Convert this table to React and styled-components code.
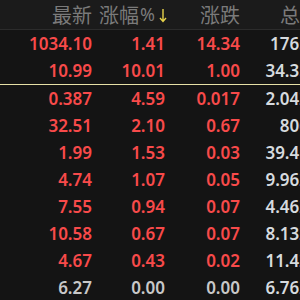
import React from "react";
import styled, { createGlobalStyle } from "styled-components";

const Global = createGlobalStyle`
  html, body { margin: 0; padding: 0; overflow: hidden; background: #141414; }
  #root { width: 300px; height: 300px; overflow: hidden; }
`;

const Table = styled.div`
  width: 300px;
  height: 300px;
  overflow: hidden;
  background: #141414;
  font-family: "Noto Sans", "Noto Sans CJK SC", sans-serif;
`;

const cols = "92px 73px 75px 69px";

const HeaderRow = styled.div`
  display: grid;
  grid-template-columns: ${cols};
  width: 309px;
  height: 29px;
  background: #1b1b1b;
  border-bottom: 1px solid #2c2c2c;
  align-items: center;
`;

const HeadCell = styled.div`
  display: flex;
  justify-content: flex-end;
  align-items: center;
  white-space: nowrap;
  font-family: "Noto Sans CJK SC", "Noto Sans", sans-serif;
  font-size: 20px;
  line-height: 29px;
  color: #7a7a7a;
  margin-right: ${(p) => p.$shift || 0}px;
`;

const Percent = styled.span`
  font-family: "Noto Sans", sans-serif;
  font-size: 18px;
  margin-left: 1px;
`;

const SortArrow = styled.svg`
  width: 8px;
  height: 15px;
  margin-left: 4px;
  margin-top: 1px;
`;

const Row = styled.div`
  display: grid;
  grid-template-columns: ${cols};
  width: 309px;
  height: 27px;
  align-items: center;
  border-bottom: ${(p) => (p.$divider ? "1px solid #e6e0a6" : "none")};
`;

const Cell = styled.div`
  text-align: right;
  white-space: nowrap;
  font-size: 17px;
  font-weight: 600;
  line-height: 27px;
  color: ${(p) => (p.$up ? "#f84a4a" : p.$light ? "#d6dade" : "#c8c8c8")};
`;

const rows = [
  ["1034.10", "1.41", "14.34", "1765"],
  ["10.99", "10.01", "1.00", "34.35"],
  ["0.387", "4.59", "0.017", "2.042"],
  ["32.51", "2.10", "0.67", "806"],
  ["1.99", "1.53", "0.03", "39.41"],
  ["4.74", "1.07", "0.05", "9.962"],
  ["7.55", "0.94", "0.07", "4.462"],
  ["10.58", "0.67", "0.07", "8.132"],
  ["4.67", "0.43", "0.02", "11.42"],
  ["6.27", "0.00", "0.00", "6.762"],
];

export default function App() {
  return (
    <>
      <Global />
      <Table>
        <HeaderRow>
          <HeadCell>最新</HeadCell>
          <HeadCell $shift={-2}>
            涨幅<Percent>%</Percent>
            <SortArrow viewBox="0 0 8 15">
              <path d="M4 1 V13 M1 10 L4 13.5 L7 10" stroke="#e6d24a" strokeWidth="1.4" fill="none" />
            </SortArrow>
          </HeadCell>
          <HeadCell>涨跌</HeadCell>
          <HeadCell $shift={-11}>总手</HeadCell>
        </HeaderRow>
        {rows.map((r, i) => {
          const up = parseFloat(r[1]) > 0;
          return (
            <Row key={i} $divider={i === 1}>
              <Cell $up={up}>{r[0]}</Cell>
              <Cell $up={up}>{r[1]}</Cell>
              <Cell $up={up}>{r[2]}</Cell>
              <Cell $light>{r[3]}</Cell>
            </Row>
          );
        })}
      </Table>
    </>
  );
}
